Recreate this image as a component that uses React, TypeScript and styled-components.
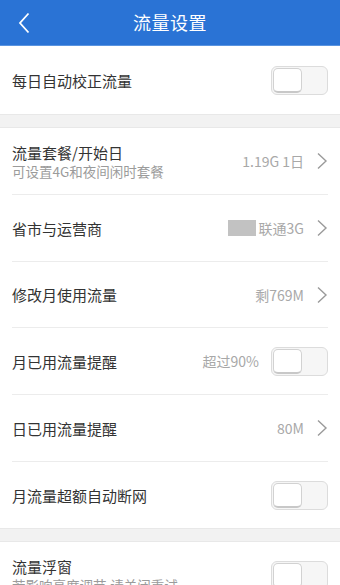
import React from "react";
import styled, { createGlobalStyle } from "styled-components";

const GlobalStyle = createGlobalStyle`
  html, body {
    margin: 0;
    padding: 0;
    background: #f2f2f2;
  }
  body {
    width: 340px;
    height: 585px;
    overflow: hidden;
    font-family: "Noto Sans CJK SC", "Noto Sans", sans-serif;
  }
`;

const Page = styled.div`
  width: 340px;
  display: flex;
  flex-direction: column;
  background: #f2f2f2;
`;

const Header = styled.header`
  height: 45px;
  background: #2a73d5;
  border-bottom: 1px solid #5a94e0;
  display: flex;
  align-items: center;
  justify-content: center;
  position: relative;
  color: #fff;
`;

const BackButton = styled.button`
  position: absolute;
  left: 12px;
  top: 10px;
  width: 24px;
  height: 26px;
  border: none;
  padding: 0;
  background: transparent;
  display: flex;
  align-items: center;
  justify-content: center;
`;

const Title = styled.h1`
  margin: 0;
  font-size: 18px;
  font-weight: 400;
  letter-spacing: 0.5px;
  line-height: 22px;
  margin-top: -2px;
`;

const Section = styled.section`
  background: #fff;
  display: flex;
  flex-direction: column;
`;

const Gap = styled.div`
  height: 12px;
  background: #f2f2f2;
  border-top: 1px solid #e8e8e8;
  border-bottom: 1px solid #e8e8e8;
`;

const Row = styled.div<{ $height: number; $divider?: boolean }>`
  height: ${(p) => p.$height}px;
  margin: 0 12px;
  display: flex;
  align-items: center;
  box-sizing: border-box;
  border-bottom: ${(p) => (p.$divider ? "1px solid #ececec" : "none")};
`;

const Labels = styled.div`
  flex: 1;
  display: flex;
  flex-direction: column;
  gap: 0;
`;

const Label = styled.div`
  font-size: 15px;
  color: #333;
  line-height: 19px;
`;

const Sub = styled.div`
  font-size: 13.5px;
  color: #9b9b9b;
  line-height: 18px;
  white-space: nowrap;
`;

const Value = styled.span`
  font-size: 14px;
  color: #a8a8a8;
  margin-right: 12px;
  display: flex;
  align-items: center;
`;

const Swatch = styled.span`
  width: 28px;
  height: 16px;
  background: #c2c2c2;
  margin-right: 3px;
`;

const Toggle = styled.div`
  width: 57px;
  height: 29px;
  box-sizing: border-box;
  border: 1px solid #dcdcdc;
  border-radius: 6px;
  background: #f6f6f6;
  padding: 1px;
  display: flex;
`;

const Knob = styled.div`
  width: 29px;
  height: 25px;
  box-sizing: border-box;
  background: #fff;
  border: 1px solid #d2d2d2;
  border-bottom: 2px solid #c8c8c8;
  border-radius: 5px;
`;

const Chevron = () => (
  <svg width="12" height="18" viewBox="0 0 12 18">
    <path d="M2 1.5 L10 9 L2 16.5" fill="none" stroke="#9a9a9a" strokeWidth="1.4" />
  </svg>
);

const Switch = () => (
  <Toggle>
    <Knob />
  </Toggle>
);

const App: React.FC = () => {
  return (
    <Page>
      <GlobalStyle />
      <Header>
        <BackButton>
          <svg width="14" height="22" viewBox="0 0 14 22">
            <path d="M11.5 1.5 L3 11 L11.5 20.5" fill="none" stroke="#fff" strokeWidth="1.8" />
          </svg>
        </BackButton>
        <Title>流量设置</Title>
      </Header>

      <Section>
        <Row $height={68}>
          <Labels>
            <Label>每日自动校正流量</Label>
          </Labels>
          <Switch />
        </Row>
      </Section>

      <Gap />

      <Section>
        <Row $height={67} $divider>
          <Labels>
            <Label>流量套餐/开始日</Label>
            <Sub>可设置4G和夜间闲时套餐</Sub>
          </Labels>
          <Value>1.19G 1日</Value>
          <Chevron />
        </Row>
        <Row $height={67} $divider>
          <Labels>
            <Label>省市与运营商</Label>
          </Labels>
          <Value>
            <Swatch />
            联通3G
          </Value>
          <Chevron />
        </Row>
        <Row $height={66} $divider>
          <Labels>
            <Label>修改月使用流量</Label>
          </Labels>
          <Value>剩769M</Value>
          <Chevron />
        </Row>
        <Row $height={67} $divider>
          <Labels>
            <Label>月已用流量提醒</Label>
          </Labels>
          <Value>超过90%</Value>
          <Switch />
        </Row>
        <Row $height={67} $divider>
          <Labels>
            <Label>日已用流量提醒</Label>
          </Labels>
          <Value>80M</Value>
          <Chevron />
        </Row>
        <Row $height={66}>
          <Labels>
            <Label>月流量超额自动断网</Label>
          </Labels>
          <Switch />
        </Row>
      </Section>

      <Gap />

      <Section>
        <Row $height={66}>
          <Labels>
            <Label>流量浮窗</Label>
            <Sub>若影响亮度调节,请关闭重试</Sub>
          </Labels>
          <Switch />
        </Row>
      </Section>
    </Page>
  );
};

export default App;
